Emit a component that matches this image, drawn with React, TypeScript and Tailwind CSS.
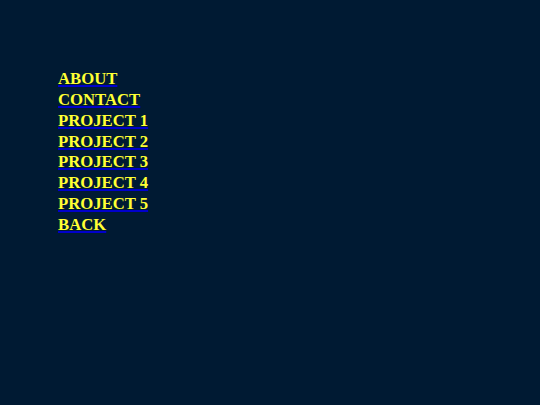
export default function App() {
  const items = ["ABOUT", "CONTACT", "PROJECT 1", "PROJECT 2", "PROJECT 3", "PROJECT 4", "PROJECT 5", "BACK"];
  return (
    <div className="w-[540px] h-[405px] bg-[#001a33] pt-[69px] pl-[58px]" style={{ fontFamily: '"Liberation Serif", serif' }}>
      <ul className="flex flex-col">
        {items.map((t) => (
          <li key={t} className="leading-[20.85px]">
            <a href="#" className="text-[16.7px] font-bold text-[#ffff33] underline decoration-[#0000cc] decoration-2">{t}</a>
          </li>
        ))}
      </ul>
    </div>
  );
}
